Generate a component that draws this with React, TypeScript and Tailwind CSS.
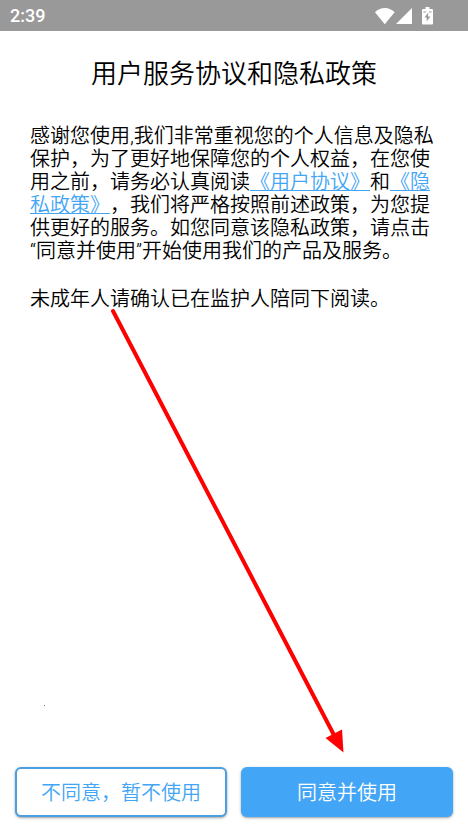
function StatusBar() {
  return (
    <header className="flex h-[31px] items-center justify-between bg-[#999999] pl-[10px] pr-[35px] text-white">
      <span className="text-lg font-medium">2:39</span>
      <div className="flex items-center">
        <svg width="20" height="18" viewBox="0 0 20 18" fill="currentColor" aria-hidden="true">
          <path d="M0 5.3C2.4 2.7 6 1 9.800 1s7.400 1.700 9.800 4.300L9.800 17.200Z" />
        </svg>
        <svg className="ml-px" width="17" height="18" viewBox="0 0 17 18" fill="currentColor" aria-hidden="true">
          <path d="M0 17 16 1v16Z" />
        </svg>
        <svg className="ml-[9px]" width="11" height="18" viewBox="0 0 11 18" aria-hidden="true">
          <path
            fill="currentColor"
            d="M3.500 0h4v2H10a1 1 0 0 1 1 1v13.500a1 1 0 0 1-1 1H1a1 1 0 0 1-1-1V3a1 1 0 0 1 1-1h2.500Z"
          />
          <path fill="#999999" d="M6.200 5.500 2.500 10.500h2.300L4.500 14.500l4-5H6Z" />
          <path stroke="#999999" d="M1.500 5h2.500M7 5h2.500" />
        </svg>
      </div>
    </header>
  );
}

function Arrow() {
  return (
    <svg
      className="pointer-events-none absolute left-[108px] top-[306px]"
      width="240"
      height="450"
      viewBox="108 306 240 450"
      aria-hidden="true"
    >
      <path d="M113 311 335 737" stroke="#ff0000" strokeWidth="4" strokeLinecap="round" />
      <path d="M343.500 752.500 325.500 738 342 729.500Z" fill="#ff0000" />
    </svg>
  );
}

export default function App() {
  return (
    <div
      lang="zh-CN"
      className="relative flex min-h-screen flex-col bg-white font-['Roboto','Noto_Sans_CJK_SC',sans-serif] text-black [text-spacing-trim:space-all]"
    >
      <StatusBar />

      <main className="flex flex-1 flex-col px-[30px] pt-[25px] font-[350]">
        <h1 className="text-center text-[26px] leading-9 font-[350]">用户服务协议和隐私政策</h1>
        <p className="mt-[33px] text-xl leading-[23px]">
          感谢您使用,我们非常重视您的个人信息及隐私保护，为了更好地保障您的个人权益，在您使用之前，请务必认真阅读
          <a href="#terms" className="text-[#42a5f5] underline decoration-1">
            《用户协议》
          </a>
          和
          <a href="#privacy" className="text-[#42a5f5] underline decoration-1">
            《隐私政策》
          </a>
          ，我们将严格按照前述政策，为您提供更好的服务。如您同意该隐私政策，请点击“同意并使用”开始使用我们的产品及服务。
        </p>
        <p className="mt-[25px] text-xl leading-[23px]">未成年人请确认已在监护人陪同下阅读。</p>
        <span className="mb-[61px] ml-3.5 mt-auto size-px bg-gray-500" />
      </main>

      <footer className="grid grid-cols-2 gap-3.5 px-[15px] pb-[15px] font-[350]">
        <button
          type="button"
          className="h-[50px] rounded-md border-2 border-[#4a9fe0] bg-white pt-0.5 text-xl text-[#42a5f5] shadow-sm shadow-black/30"
        >
          不同意，暂不使用
        </button>
        <button
          type="button"
          className="h-[50px] rounded-md bg-[#42a5f5] pt-0.5 text-xl text-white shadow-sm shadow-black/30"
        >
          同意并使用
        </button>
      </footer>

      <Arrow />
    </div>
  );
}
